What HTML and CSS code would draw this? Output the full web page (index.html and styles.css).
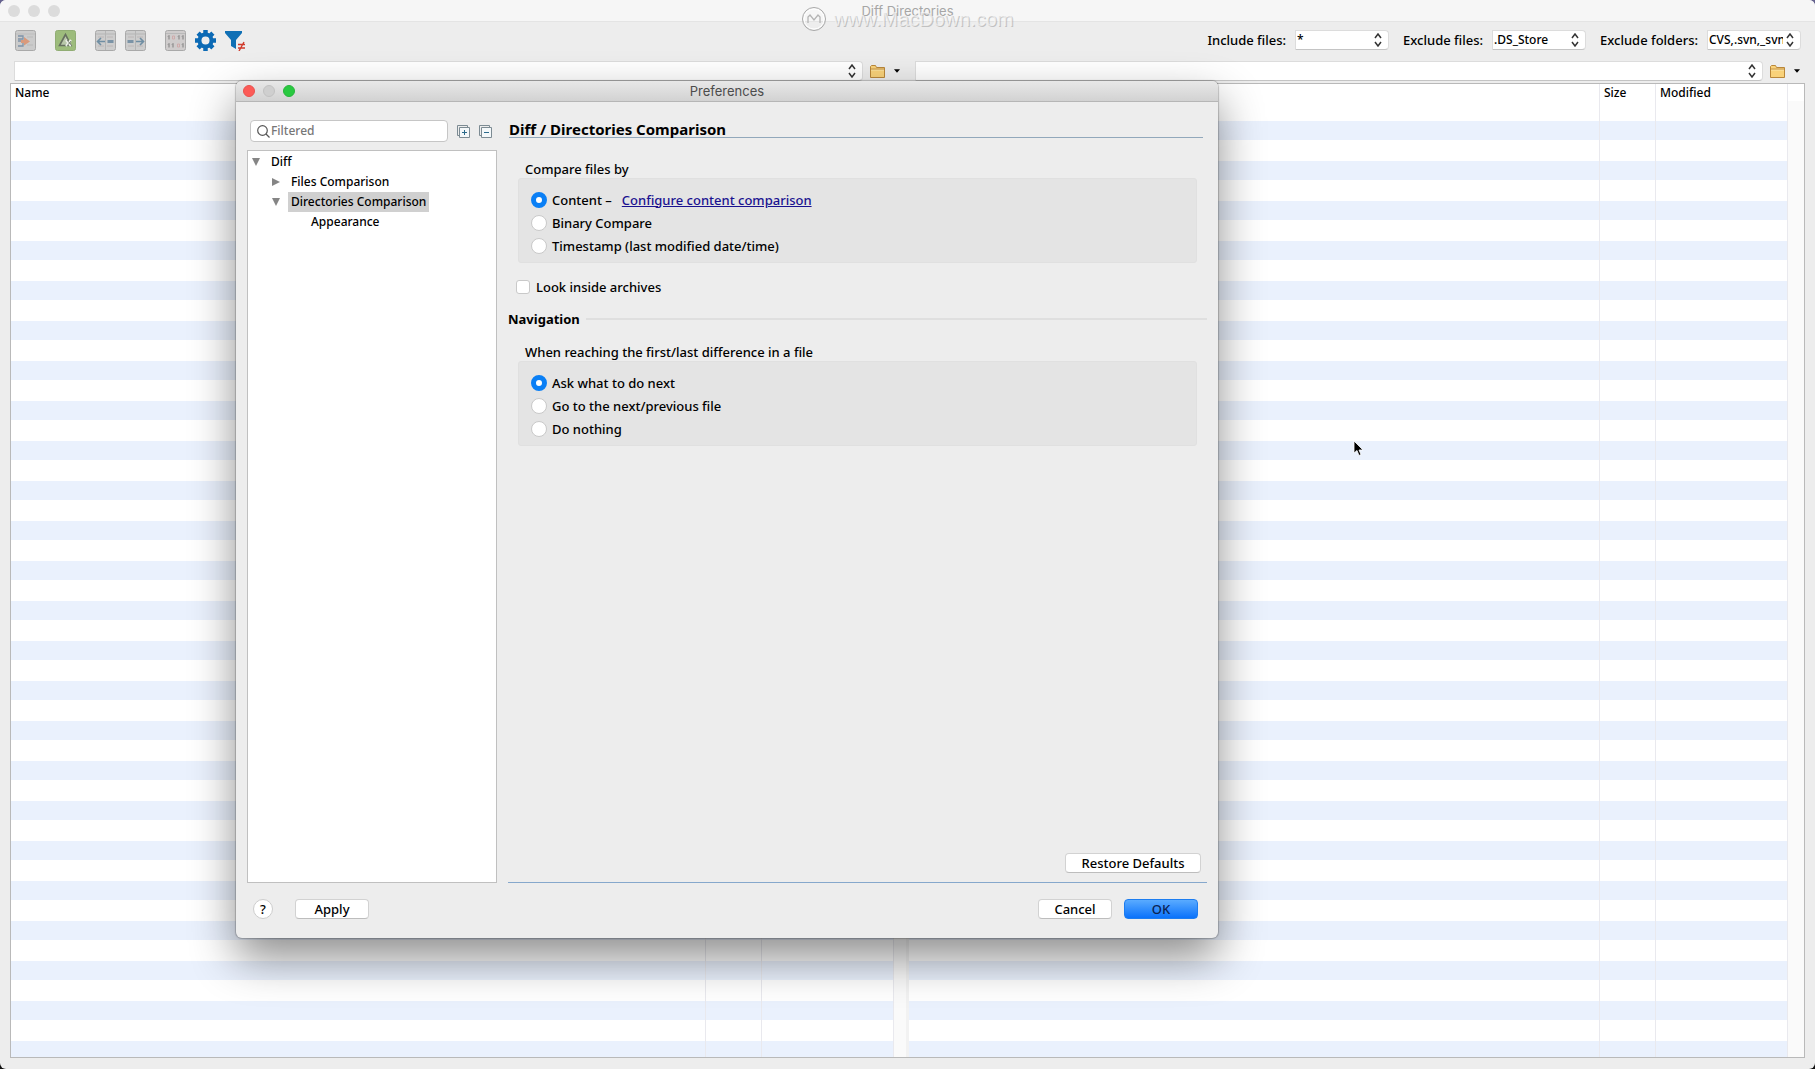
FILE: index.html
```
<!DOCTYPE html>
<html lang="en">
<head>
    <meta charset="UTF-8">
    <meta name="viewport" content="width=device-width, initial-scale=1.0">
    <title>Diff Directories</title>
    <link rel="stylesheet" href="styles.css">
</head>
<body>
<div class="window">
    <header class="titlebar">
        <div class="lights"><span></span><span></span><span></span></div>
        <h1>Diff Directories</h1>
    </header>

    <div class="watermark">
        <svg width="26" height="26" viewBox="0 0 26 26" fill="none" stroke="#b4b4b4">
            <circle cx="13" cy="13" r="11.5" stroke="#a8a8a8"/>
            <circle cx="13" cy="13" r="10" stroke="#fff"/>
            <path d="M7 17v-6l2-2 4 5 4-5 2 2v6" stroke-width="1.3"/>
        </svg>
        <span>www.MacDown.com</span>
    </div>

    <div class="toolbar">
        <div class="tools">
            <button type="button" class="tool" aria-label="Compare">
                <svg viewBox="0 0 21 21"><rect x=".5" y=".5" width="20" height="20" rx="2" fill="#cbcbcb" stroke="#a9a9a9"/><path d="M1 4h19" stroke="#bdbdbd"/><path d="M3 6h5v3H3M3 11h5M3 16h5v-3" fill="none" stroke="#7f93a8" stroke-width="1.3"/><path d="M12 7h6M12 15h6" stroke="#b9b9b9"/><path d="M6 10h3V7l6 4.500-6 4V13H6z" fill="#d99a7c"/></svg>
            </button>
            <button type="button" class="tool gap-l" aria-label="Show changes">
                <svg viewBox="0 0 21 21"><rect x=".5" y=".5" width="20" height="20" rx="2" fill="#9dbc7c" stroke="#91ad74"/><path d="M10.500 4.500 4.500 15.500H16z" fill="#b9c8aa" stroke="#66705f" stroke-width="1.600"/><path d="M11 10l5 6M16 10l-5 6" stroke="#eef2ea" stroke-width="2.200"/><path d="M12 10l5 6M16 11l-4 5" stroke="#66705f" stroke-width=".8"/></svg>
            </button>
            <button type="button" class="tool gap-l" aria-label="Copy left">
                <svg viewBox="0 0 21 21"><rect x=".5" y=".5" width="20" height="20" rx="2" fill="#cdcdcd" stroke="#a9a9a9"/><path d="M1 4h19M10.500 1v19" stroke="#b5b5b5"/><path d="M3 7h6M3 16h6M12 7h6M12 16h6" stroke="#bcb6b6"/><path d="M10 11.500H3M6 8l-3.500 3.500L6 15" fill="none" stroke="#6f8ea3" stroke-width="1.600"/><path d="M12.500 11.500h6" stroke="#7b93a6" stroke-width="3"/></svg>
            </button>
            <button type="button" class="tool" aria-label="Copy right">
                <svg viewBox="0 0 21 21"><rect x=".5" y=".5" width="20" height="20" rx="2" fill="#cdcdcd" stroke="#a9a9a9"/><path d="M1 4h19M10.500 1v19" stroke="#b5b5b5"/><path d="M3 7h6M3 16h6M12 7h6M12 16h6" stroke="#bcb6b6"/><path d="M11 11.500h7M15 8l3.500 3.500L15 15" fill="none" stroke="#6f8ea3" stroke-width="1.600"/><path d="M2.500 11.500h6" stroke="#7b93a6" stroke-width="3"/></svg>
            </button>
            <button type="button" class="tool gap-l" aria-label="Binary compare">
                <svg viewBox="0 0 21 21"><rect x=".5" y=".5" width="20" height="20" rx="2" fill="#cfcccc" stroke="#a9a9a9"/><path d="M1 3.500h19" stroke="#b9b9b9"/><path d="M3 6.500l1-1v4M13 6.500l1-1v4M17 6.500l1-1v4M3 14.500l1-1v4M7 14.500l1-1v4M17 14.500l1-1v4" fill="none" stroke="#7f7f7f"/><path d="M7.500 6h2v3h-2zM12.500 14h2v3h-2z" fill="none" stroke="#cfa3a3" stroke-width=".8"/></svg>
            </button>
            <button type="button" class="tool" aria-label="Preferences">
                <svg viewBox="0 0 21 21"><g stroke="#0c6ab5" stroke-width="4.500"><path d="M10.500 0v21M0 10.500h21M3.100 3.100l14.800 14.800M17.900 3.100 3.100 17.900"/></g><circle cx="10.500" cy="10.500" r="8" fill="#0c6ab5"/><circle cx="10.500" cy="10.500" r="4" fill="#ededed"/></svg>
            </button>
            <button type="button" class="tool" aria-label="Show only differences">
                <svg viewBox="0 0 21 21"><path d="M0 1h17v2l-6 7v9l-5-3v-6L0 3z" fill="#1070b5"/><path d="M13 14.500h7M13 18h7M19 12l-5 9" stroke="#d03b2c" stroke-width="1.400"/></svg>
            </button>
        </div>
        <div class="filters">
            <label for="include-files">Include files:</label>
            <span class="combo">
                <select id="include-files"><option>*</option></select>
                <svg viewBox="0 0 8 14"><path d="M1 5l3-4 3 4M1 9l3 4 3-4"/></svg>
            </span>
            <label for="exclude-files">Exclude files:</label>
            <span class="combo">
                <select id="exclude-files"><option>.DS_Store</option></select>
                <svg viewBox="0 0 8 14"><path d="M1 5l3-4 3 4M1 9l3 4 3-4"/></svg>
            </span>
            <label for="exclude-folders">Exclude folders:</label>
            <span class="combo">
                <select id="exclude-folders"><option>CVS,.svn,_svn</option></select>
                <svg viewBox="0 0 8 14"><path d="M1 5l3-4 3 4M1 9l3 4 3-4"/></svg>
            </span>
        </div>
    </div>

    <div class="paths">
        <div class="path">
            <span class="combo">
                <select aria-label="Left directory"><option></option></select>
                <svg viewBox="0 0 8 14"><path d="M1 5l3-4 3 4M1 9l3 4 3-4"/></svg>
            </span>
            <button type="button" class="browse" aria-label="Browse left directory">
                <svg width="15" height="13" viewBox="0 0 15 13"><path d="M.5 12.500v-11l1-1h4l1 2h8v10z" fill="#f9d27a" stroke="#b9873a"/><path d="M1 5h13" stroke="#fbe7ad"/><path d="M1 4h13" stroke="#c4954a"/></svg>
                <svg width="6" height="4" viewBox="0 0 7 4"><path d="M0 0h7L3.500 4z"/></svg>
            </button>
        </div>
        <div class="path">
            <span class="combo">
                <select aria-label="Right directory"><option></option></select>
                <svg viewBox="0 0 8 14"><path d="M1 5l3-4 3 4M1 9l3 4 3-4"/></svg>
            </span>
            <button type="button" class="browse" aria-label="Browse right directory">
                <svg width="15" height="13" viewBox="0 0 15 13"><path d="M.5 12.500v-11l1-1h4l1 2h8v10z" fill="#f9d27a" stroke="#b9873a"/><path d="M1 5h13" stroke="#fbe7ad"/><path d="M1 4h13" stroke="#c4954a"/></svg>
                <svg width="6" height="4" viewBox="0 0 7 4"><path d="M0 0h7L3.500 4z"/></svg>
            </button>
        </div>
    </div>

    <main class="panes">
        <section class="pane">
            <table>
                <thead><tr><th>Name</th><th class="size"></th><th class="modified"></th></tr></thead>
                <tbody><tr><td></td><td></td><td></td></tr></tbody>
            </table>
            <div class="scroll"></div>
        </section>
        <section class="pane">
            <table>
                <thead><tr><th></th><th class="size">Size</th><th class="modified">Modified</th></tr></thead>
                <tbody><tr><td></td><td></td><td></td></tr></tbody>
            </table>
            <div class="scroll wide"></div>
        </section>
    </main>
</div>

<div class="dialog" role="dialog" aria-labelledby="dialog-title">
    <div class="dialog-title">
        <div class="lights active"><span class="red"></span><span></span><span class="green"></span></div>
        <h2 id="dialog-title">Preferences</h2>
    </div>
    <div class="dialog-body">
        <div class="sidebar">
            <div class="search-row">
                <div class="search">
                    <svg width="13" height="13" viewBox="0 0 13 13" fill="none" stroke="#555" stroke-width="1.200"><circle cx="5.500" cy="5.500" r="4.800"/><path d="M9 9l3.500 3.500"/></svg>
                    <input type="text" placeholder="Filtered" aria-label="Filter">
                </div>
                <button type="button" class="mini" aria-label="Expand all">
                    <svg width="13" height="13" viewBox="0 0 13 13" fill="none" stroke="#7c8b93"><path d="M2 10.500H.5V.5h10V2"/><path d="M2.500 2.500h10v10h-10z" fill="#f4f8fa"/><path d="M5 7.500h5M7.500 5v5" stroke="#2c6b8c"/></svg>
                </button>
                <button type="button" class="mini" aria-label="Collapse all">
                    <svg width="13" height="13" viewBox="0 0 13 13" fill="none" stroke="#7c8b93"><path d="M2 10.500H.5V.5h10V2"/><path d="M2.500 2.500h10v10h-10z" fill="#f4f8fa"/><path d="M5 7.500h5" stroke="#2c6b8c"/></svg>
                </button>
            </div>
            <ul class="tree">
                <li>
                    <svg viewBox="0 0 8 8"><path d="M0 0h8L4 8z"/></svg><span>Diff</span>
                    <ul>
                        <li><svg viewBox="0 0 8 8"><path d="M0 0v8l8-4z"/></svg><span>Files Comparison</span></li>
                        <li>
                            <svg viewBox="0 0 8 8"><path d="M0 0h8L4 8z"/></svg><span class="selected">Directories Comparison</span>
                            <ul>
                                <li><svg viewBox="0 0 8 8"></svg><span>Appearance</span></li>
                            </ul>
                        </li>
                    </ul>
                </li>
            </ul>
        </div>
        <div class="content">
            <h3>Diff / Directories Comparison</h3>
            <fieldset>
                <legend>Compare files by</legend>
                <div class="options">
                    <div class="option">
                        <input type="radio" name="compare" id="by-content" checked>
                        <label for="by-content">Content –</label>
                        <a href="#">Configure content comparison</a>
                    </div>
                    <div class="option">
                        <input type="radio" name="compare" id="by-binary">
                        <label for="by-binary">Binary Compare</label>
                    </div>
                    <div class="option">
                        <input type="radio" name="compare" id="by-time">
                        <label for="by-time">Timestamp (last modified date/time)</label>
                    </div>
                </div>
            </fieldset>
            <div class="check">
                <input type="checkbox" id="archives">
                <label for="archives">Look inside archives</label>
            </div>
            <h4>Navigation</h4>
            <fieldset>
                <legend>When reaching the first/last difference in a file</legend>
                <div class="options">
                    <div class="option">
                        <input type="radio" name="nav" id="nav-ask" checked>
                        <label for="nav-ask">Ask what to do next</label>
                    </div>
                    <div class="option">
                        <input type="radio" name="nav" id="nav-go">
                        <label for="nav-go">Go to the next/previous file</label>
                    </div>
                    <div class="option">
                        <input type="radio" name="nav" id="nav-none">
                        <label for="nav-none">Do nothing</label>
                    </div>
                </div>
            </fieldset>
            <div class="restore">
                <button type="button" class="btn wide">Restore Defaults</button>
            </div>
        </div>
    </div>
    <div class="dialog-footer">
        <button type="button" class="help">?</button>
        <button type="button" class="btn">Apply</button>
        <button type="button" class="btn cancel">Cancel</button>
        <button type="button" class="btn primary">OK</button>
    </div>
</div>

<svg class="cursor" width="11" height="17" viewBox="0 0 11 17"><path d="M1 1v12l3-2.500 2 5 2-1-2-4.500h4z" fill="#000" stroke="#fff" stroke-width=".8"/></svg>
</body>
</html>
```
FILE: styles.css
```
* {
    box-sizing: border-box;
}

body {
    margin: 0;
    height: 100vh;
    overflow: hidden;
    position: relative;
    font-family: "Noto Sans", "Open Sans", sans-serif;
    font-size: 13px;
    font-weight: 500;
    line-height: 20px;
    color: #000;
    background: linear-gradient(#66638f, #111);
}

h1, h2, h3, h4, ul, fieldset {
    margin: 0;
    padding: 0;
}

button, input, select {
    font: inherit;
    color: inherit;
    margin: 0;
}

button {
    border: 0;
    background: none;
    padding: 0;
}

svg {
    display: block;
    flex: none;
}

/* Main window */
.window {
    height: 100%;
    display: flex;
    flex-direction: column;
    background: #ededed;
    border-radius: 6px;
    overflow: hidden;
}

.titlebar {
    height: 22px;
    flex: none;
    display: grid;
    grid-template-columns: 1fr auto 1fr;
    align-items: center;
    padding: 1px 8px 0;
    background: #f6f6f6;
    border-bottom: 1px solid #e4e4e4;
}

.titlebar h1,
.dialog-title h2 {
    font-family: Inter, "Liberation Sans", sans-serif;
    font-size: 13px;
    font-weight: normal;
    color: #a6a6a6;
}

.lights {
    display: flex;
    gap: 8px;
}

.lights span {
    width: 12px;
    height: 12px;
    border-radius: 50%;
    background: #dcdcdc;
}

.lights.active span {
    background: #cfcfcf;
    border: 1px solid #c2c2c2;
}

.lights.active .red {
    background: #fc5b57;
    border-color: #e9524e;
}

.lights.active .green {
    background: #29c940;
    border-color: #27b53b;
}

.watermark {
    position: absolute;
    top: 6px;
    left: 0;
    right: 0;
    display: flex;
    justify-content: center;
    align-items: center;
    gap: 6px;
    pointer-events: none;
    font-family: "Liberation Sans", sans-serif;
    font-size: 20px;
    font-weight: normal;
    color: rgba(246, 246, 246, 0.7);
    text-shadow: 1px 1px 0 rgba(150, 150, 150, 0.5);
}

/* Toolbar */
.toolbar {
    flex: none;
    height: 39px;
    display: flex;
    align-items: center;
    justify-content: space-between;
    padding: 0 14px 4px 15px;
}

.tools {
    display: flex;
    gap: 9px;
    padding-top: 2px;
}

.tool {
    width: 21px;
    height: 21px;
}

.gap-l {
    margin-left: 10px;
}

.filters {
    display: flex;
    align-items: center;
}

.filters label {
    margin-left: 14px;
    margin-right: 9px;
}

.combo {
    position: relative;
    display: block;
}

.combo select {
    appearance: none;
    display: block;
    width: 100%;
    height: 20px;
    line-height: 18px;
    padding: 0 17px 0 1px;
    border: 1px solid #dcdcdc;
    border-bottom-color: #c4c4c4;
    border-radius: 0 4px 4px 0;
    background: #fff;
    color: #000;
    text-overflow: clip;
}

.combo svg {
    position: absolute;
    right: 7px;
    top: 3px;
    width: 8px;
    height: 14px;
    fill: none;
    stroke: #333;
    stroke-width: 1.5;
    pointer-events: none;
}

.filters .combo {
    width: 94px;
}

.filters select {
    font-size: 12px;
}

.paths {
    flex: none;
    display: flex;
    padding-left: 14px;
}

.path {
    flex: 1;
    display: flex;
    align-items: center;
}

.path .combo {
    flex: 1;
}

.browse {
    width: 52px;
    display: flex;
    align-items: center;
    gap: 9px;
    padding-left: 7px;
}

/* Directory tables */
.panes {
    flex: 1;
    display: flex;
    gap: 3px;
    margin: 2px 10px 11px;
    border: 1px solid #b9b9b9;
    background: #f2f2f2;
}

.pane {
    flex: 1;
    display: flex;
    background: #fff;
}

table {
    flex: 1;
    width: 100%;
    height: 100%;
    table-layout: fixed;
    border-collapse: collapse;
    /* 20px rows under the header, every other one tinted */
    background: repeating-linear-gradient(#fff 0, #fff 20px, #eaf1fd 20px, #eaf1fd 39px, #fff 39px, #fff 40px) 0 17px no-repeat #fff;
}

th {
    height: 17px;
    padding: 0 4px;
    font-size: 12px;
    line-height: 17px;
    font-weight: 500;
    text-align: left;
}

.size {
    width: 56px;
}

.modified {
    width: 132px;
}

td, th {
    border-right: 1px solid #e9e9ee;
}

.scroll {
    width: 12px;
    flex: none;
    margin-top: 17px;
    background: #fafafa;
}

.scroll.wide {
    width: 16px;
}

/* Preferences dialog */
.dialog {
    position: absolute;
    top: 81px;
    left: 236px;
    right: 597px;
    bottom: 131px;
    display: flex;
    flex-direction: column;
    background: #ededed;
    border-radius: 6px;
    box-shadow: 0 0 1px 1px rgba(0, 0, 0, 0.2), 0 20px 45px rgba(0, 0, 0, 0.45);
}

.dialog-title {
    flex: none;
    height: 21px;
    display: grid;
    grid-template-columns: 1fr auto 1fr;
    align-items: center;
    padding: 0 7px;
    background: linear-gradient(#e8e8e8, #d2d2d2);
    border-bottom: 1px solid #b6b6b6;
    border-radius: 6px 6px 0 0;
}

.dialog-title h2 {
    color: #4c4c4c;
}

.dialog-body {
    flex: 1;
    display: flex;
    gap: 11px;
    padding: 18px 11px 0;
}

.sidebar {
    width: 250px;
    flex: none;
    display: flex;
    flex-direction: column;
}

.search-row {
    display: flex;
    align-items: center;
    gap: 9px;
    padding: 0 5px 0 3px;
    margin-bottom: 8px;
}

.search {
    flex: 1;
    height: 22px;
    display: flex;
    align-items: center;
    padding-left: 6px;
    background: #fff;
    border: 1px solid #c6c6c6;
    border-radius: 4px;
}

.search input {
    flex: 1;
    min-width: 0;
    height: 18px;
    border: 0;
    padding: 0 1px;
    background: none;
    font-size: 12px;
}

.search input::placeholder {
    color: #777;
}

.tree {
    flex: 1;
    background: #fff;
    border: 1px solid #c0c0c0;
    padding: 1px 0 0 4px;
    font-size: 12px;
}

.tree, .tree ul {
    list-style: none;
}

.tree ul {
    width: 100%;
    padding-left: 20px;
}

.tree li {
    display: flex;
    flex-wrap: wrap;
    align-items: center;
    column-gap: 8px;
}

.tree li > svg {
    width: 8px;
    height: 8px;
    fill: #858585;
}

.tree span {
    padding: 0 3px;
}

.tree .selected {
    background: #d0d0d0;
}

.content {
    flex: 1;
    display: flex;
    flex-direction: column;
    border-bottom: 1px solid #86a8cc;
}

h3 {
    margin: 0 4px 0 1px;
    height: 18px;
    font-size: 15px;
    line-height: 18px;
    border-bottom: 1px solid #92a8bb;
}

fieldset {
    border: 0;
    margin: 21px 10px 0;
}

legend {
    padding: 0 7px;
    height: 19px;
}

.options {
    background: #e4e4e4;
    border: 1px solid #e0e0e0;
    border-radius: 3px;
    padding: 9px 12px 5px;
}

.option {
    display: flex;
    align-items: center;
    gap: 5px;
    height: 23px;
}

.option a {
    margin-left: 5px;
    color: #1a1290;
}

input[type="radio"],
input[type="checkbox"] {
    appearance: none;
    width: 16px;
    height: 16px;
    background: #fff;
    border: 1px solid #c9c9c9;
    border-radius: 50%;
}

input[type="radio"]:checked {
    border: 5px solid #0a7ff5;
}

input[type="checkbox"] {
    width: 14px;
    height: 14px;
    border-radius: 3px;
}

.check {
    display: flex;
    align-items: center;
    gap: 6px;
    margin: 14px 8px 0;
}

h4 {
    display: flex;
    align-items: center;
    gap: 6px;
    margin-top: 12px;
    font-size: 13px;
}

h4::after {
    content: "";
    flex: 1;
    border-top: 2px solid #dfdfdf;
}

h4 + fieldset {
    margin-top: 13px;
}

.restore {
    margin-top: auto;
    padding: 0 6px 9px;
    text-align: right;
}

.btn {
    width: 74px;
    height: 20px;
    line-height: 18px;
    background: #fff;
    border: 1px solid #d2d2d2;
    border-bottom-color: #bdbdbd;
    border-radius: 4px;
}

.btn.wide {
    width: 136px;
}

.btn.primary {
    background: linear-gradient(#5aabff, #0a72fb);
    border-color: #1d7df0;
    color: #0b2352;
}

.dialog-footer {
    flex: none;
    display: flex;
    align-items: center;
    padding: 16px 20px 19px 17px;
}

.help {
    width: 20px;
    height: 20px;
    margin-right: 22px;
    line-height: 18px;
    background: #fff;
    border: 1px solid #cdcdcd;
    border-radius: 50%;
}

.cancel {
    margin-left: auto;
    margin-right: 12px;
}

/* Mouse pointer */
.cursor {
    position: absolute;
    top: 440px;
    left: 1353px;
}
```
